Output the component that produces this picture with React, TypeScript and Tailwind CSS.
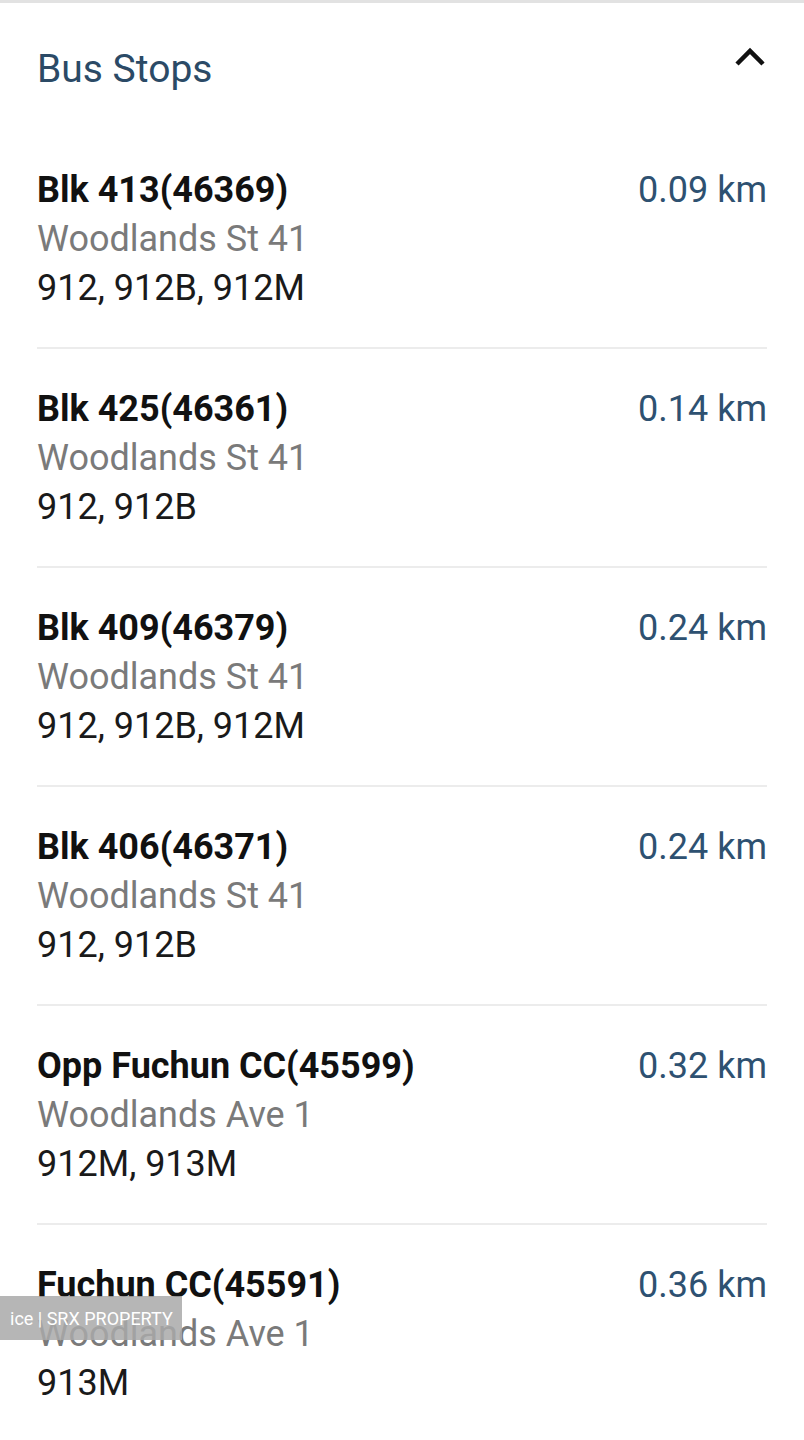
import React from "react";

const stops = [
  { name: "Blk 413(46369)", road: "Woodlands St 41", routes: "912, 912B, 912M", dist: "0.09 km" },
  { name: "Blk 425(46361)", road: "Woodlands St 41", routes: "912, 912B", dist: "0.14 km" },
  { name: "Blk 409(46379)", road: "Woodlands St 41", routes: "912, 912B, 912M", dist: "0.24 km" },
  { name: "Blk 406(46371)", road: "Woodlands St 41", routes: "912, 912B", dist: "0.24 km" },
  { name: "Opp Fuchun CC(45599)", road: "Woodlands Ave 1", routes: "912M, 913M", dist: "0.32 km" },
  { name: "Fuchun CC(45591)", road: "Woodlands Ave 1", routes: "913M", dist: "0.36 km" },
];

export default function App() {
  return (
    <div
      className="relative w-[804px] h-[1440px] overflow-hidden bg-white"
      style={{ fontFamily: "Roboto, 'Noto Sans', sans-serif" }}
    >
      <div className="h-[3px] bg-[#e2e2e2]" />
      <div className="px-[37px]">
        <div className="flex h-[127px] items-start justify-between pt-[42px]">
          <div className="text-[39px] leading-[48px] text-[#2b4a66]">Bus Stops</div>
          <svg width="34" height="22" viewBox="0 0 34 22" className="mt-[1px]">
            <path d="M4 18 L17 5 L30 18" fill="none" stroke="#111" strokeWidth="4.5" />
          </svg>
        </div>
        {stops.map((s, i) => (
          <div key={i}>
            <div className="flex justify-between pt-[36px] pb-[34px] leading-[49px]">
              <div>
                <div className="text-[36px] font-bold text-[#111]">{s.name}</div>
                <div className="text-[36px] text-[#7a7a7a]">{s.road}</div>
                <div className="text-[36px] text-[#1a1a1a]">{s.routes}</div>
              </div>
              <div className="text-[36px] text-[#2e5171]">{s.dist}</div>
            </div>
            <div className="h-[2px] bg-[#ececec]" />
          </div>
        ))}
      </div>
      <div className="absolute left-0 top-[1296px] flex h-[44px] w-[182px] items-center bg-[#a9a9a9]/85 pl-[10px] text-[18px] text-white">
        ice | SRX PROPERTY
      </div>
    </div>
  );
}
